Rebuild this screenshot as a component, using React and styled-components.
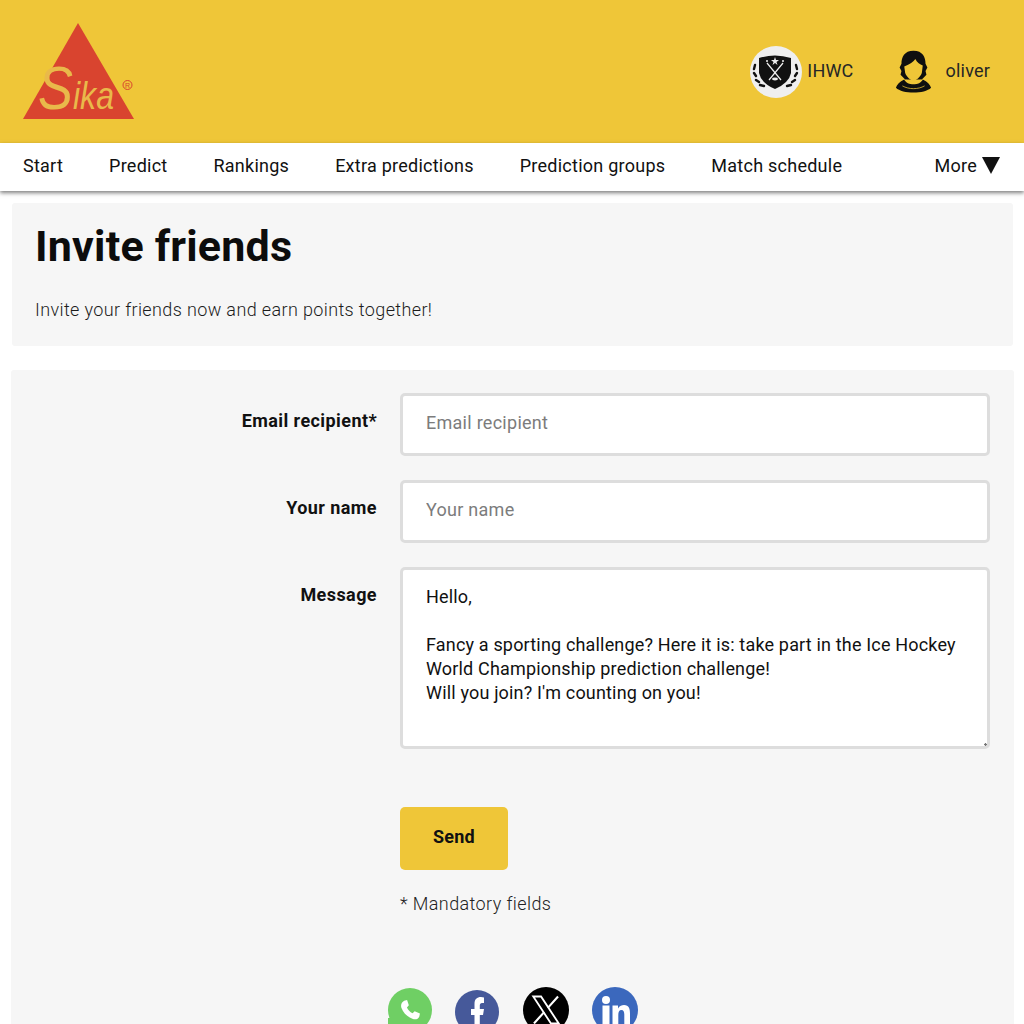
import React from "react"
import styled, { createGlobalStyle } from "styled-components"

const GlobalStyle = createGlobalStyle`
  html, body {
    margin: 0;
    padding: 0;
    height: 1024px;
    overflow: hidden;
    background: #ffffff;
    font-family: "Roboto", "Liberation Sans", sans-serif;
    color: #111111;
  }
  * { box-sizing: border-box; }
`

const Header = styled.header`
  height: 143px;
  background: #efc638;
  display: flex;
  justify-content: space-between;
  padding: 23px 34px 0 23px;
`

const UserArea = styled.div`
  display: flex;
  align-items: flex-start;
  gap: 41px;
  padding-top: 23px;
`

const UserItem = styled.div`
  display: flex;
  align-items: center;
  gap: ${p => p.$gap}px;
  height: 52px;
`

const UserName = styled.span`
  font-size: 18px;
  color: #262626;
  margin-bottom: 4px;
  letter-spacing: 0.2px;
`

const Nav = styled.nav`
  height: 48px;
  background: #fff;
  display: flex;
  align-items: center;
  gap: 46px;
  padding: 0 24px 4px 23px;
  font-size: 18px;
  letter-spacing: 0.25px;
  box-shadow: 0 2px 4px rgba(0, 0, 0, 0.5);
  position: relative;
`

const NavItem = styled.span`
  white-space: nowrap;
  ${p => p.$push && "margin-left: auto;"}
  display: flex;
  align-items: center;
  gap: 5px;
`

const Main = styled.main`
  padding: 12px 10px 0 11px;
  display: flex;
  flex-direction: column;
  gap: 24px;
`

const IntroCard = styled.section`
  height: 143px;
  background: #f6f6f6;
  border-radius: 3px;
  margin: 0 1px;
  padding: 18px 23px 0;
`

const Title = styled.h1`
  margin: 0;
  font-size: 43px;
  line-height: 50px;
  font-weight: 700;
  letter-spacing: 0.2px;
  color: #0c0c0c;
`

const Intro = styled.p`
  margin: 27px 0 0;
  font-size: 18px;
  line-height: 24px;
  font-weight: 300;
  letter-spacing: 0.37px;
  color: #1c1c1c;
`

const FormCard = styled.section`
  background: #f6f6f6;
  border-radius: 3px;
  padding: 23px 24px 0 0;
  height: 700px;
`

const FormRow = styled.div`
  display: grid;
  grid-template-columns: 366px 1fr;
  column-gap: 23px;
  margin-bottom: 24px;
`

const Label = styled.label`
  font-size: 18px;
  font-weight: 700;
  letter-spacing: 0.42px;
  text-align: right;
  padding-top: 16px;
  line-height: 24px;
  color: #111;
`

const TextInput = styled.input`
  height: 63px;
  width: 100%;
  border: 3px solid #dddddd;
  border-radius: 5px;
  background: #fff;
  padding: 0 23px 5px;
  font-family: inherit;
  font-size: 18px;
  letter-spacing: 0.27px;
  &::placeholder { color: #7c7c7c; opacity: 1; }
`

const MessageArea = styled.textarea`
  display: block;
  height: 182px;
  width: 100%;
  border: 3px solid #dddddd;
  border-radius: 5px;
  background: #fff;
  padding: 15px 23px;
  font-family: inherit;
  font-size: 18px;
  line-height: 24px;
  letter-spacing: 0.17px;
  color: #111;
  &::-webkit-resizer {
    background: radial-gradient(circle at 90% 90%, #777 0 1px, transparent 1.5px);
  }
`

const ActionColumn = styled.div`
  margin-left: 389px;
  padding-top: 34px;
`

const SendButton = styled.button`
  width: 108px;
  height: 63px;
  border: 0;
  border-radius: 5px;
  background: #efc638;
  padding: 0 0 4px;
  font-family: inherit;
  font-size: 18px;
  font-weight: 700;
  letter-spacing: 0.2px;
  color: #111;
`

const Note = styled.p`
  margin: 22px 0 0;
  font-size: 18px;
  line-height: 24px;
  font-weight: 300;
  letter-spacing: 0.4px;
  color: #222;
`

const ShareRow = styled.div`
  display: flex;
  justify-content: center;
  align-items: flex-start;
  gap: 23.5px;
  margin-top: 71px;
  padding-left: 25px;
`

const ShareIcon = styled.div`
  width: ${p => p.$size}px;
  height: ${p => p.$size}px;
  margin-top: ${p => p.$top || 0}px;
  border-radius: 50%;
  background: ${p => p.$bg};
  display: flex;
  align-items: center;
  justify-content: center;
  position: relative;
`

const WhatsappIcon = styled(ShareIcon)`
  &::after {
    content: "";
    position: absolute;
    left: 0;
    top: 30px;
    width: 10px;
    height: 14px;
    background: ${p => p.$bg};
  }
`

const SikaLogo = () => (
  <svg width="112" height="98" viewBox="0 0 112 98">
    <polygon points="55,0 111,96 0,96" fill="#d9442f" />
    <text
      x="15"
      y="86"
      fill="#e9b94a"
      fontFamily="Liberation Sans, sans-serif"
      fontStyle="italic"
      textLength="76"
      lengthAdjust="spacingAndGlyphs"
    >
      <tspan fontSize="62">S</tspan>
      <tspan fontSize="38">ika</tspan>
    </text>
    <circle cx="104.5" cy="62" r="4.5" fill="none" stroke="#d9442f" strokeWidth="1" />
    <text x="104.5" y="65" fontSize="7" textAnchor="middle" fill="#d9442f" fontFamily="Liberation Sans, sans-serif">
      R
    </text>
  </svg>
)

const TeamBadge = () => (
  <svg width="52" height="52" viewBox="0 0 52 52">
    <circle cx="26" cy="26" r="26" fill="#efefef" />
    <path d="M9 12 Q25 7 41 12 L41 27 Q39 37 25 43 Q11 37 9 27 Z" fill="#111" />
    <path d="M17 17 L31 34 M33 17 L19 34" stroke="#eee" strokeWidth="1.2" />
    <polygon points="25,11 26,14 29,14 26.5,16 27.5,19 25,17 22.5,19 23.5,16 21,14 24,14" fill="#eee" />
    <circle cx="17" cy="15" r="1" fill="#eee" />
    <circle cx="33" cy="15" r="1" fill="#eee" />
    <ellipse cx="25" cy="33" rx="3" ry="1.4" fill="#eee" />
    <path d="M5 19 L4 23 M4 27 L6 30 M6 34 L9 36 M10 39 L14 40" stroke="#111" strokeWidth="2.4" strokeLinecap="round" />
    <path d="M46 19 L47 23 M47 27 L45 30 M45 34 L42 36 M41 39 L37 40" stroke="#111" strokeWidth="2.4" strokeLinecap="round" />
  </svg>
)

const Avatar = () => (
  <svg width="37" height="44" viewBox="0 0 40 46">
    <path d="M20 0 C10 0 7 7 7 14 L5 18 L7 22 L6 26 L11 31 L29 31 L34 26 L33 22 L35 18 L33 14 C33 7 30 0 20 0 Z" fill="#0f0f0f" />
    <path d="M10 17 C16 15 20 12 22 9 C24 13 27 15 30 16 L29 24 C27 29 23 32 20 32 C17 32 13 29 11 24 Z" fill="#efc638" />
    <path d="M12 31 C14 35 26 35 28 31 L29 32 C26 38 14 38 11 32 Z" fill="#efc638" />
    <path d="M10 31 C13 38 27 38 30 31 C35 33 38 37 39 40 C32 47 8 47 1 40 C2 37 5 33 10 31 Z" fill="#0f0f0f" />
    <path d="M8 38 C15 42 25 42 32 38" stroke="#efc638" strokeWidth="0.8" fill="none" />
  </svg>
)

const Phone = () => (
  <svg width="28" height="28" viewBox="0 0 24 24">
    <path d="M7 4 L9.5 3.5 L11 8 L9.4 9.8 C10.2 11.8 12 13.8 14.2 14.8 L16 13 L20.5 15 L20 17.5 C19 20 16.5 20.5 14 19.5 C9.5 17.8 6 14 4.6 10 C3.8 7.5 5 5 7 4 Z" fill="#fff" />
  </svg>
)

const FacebookF = () => (
  <svg width="44" height="44" viewBox="0 0 44 44">
    <path d="M19.5 44 L19.5 25 L16 25 L16 19 L19.5 19 L19.5 14 C19.5 9 22 7 26 7 L29 7.4 L29 13 L27 13 C25.5 13 24.8 14 24.8 15.5 L24.8 19 L29 19 L28 25 L24.8 25 L24.8 44 Z" fill="#fff" />
  </svg>
)

const XMark = () => (
  <svg width="34" height="34" viewBox="0 0 24 24">
    <path d="M3 2.5 L8.5 2.5 L21 21.5 L15.5 21.5 Z" fill="none" stroke="#fff" strokeWidth="1.3" />
    <path d="M20.5 2.5 L13.3 10.5 M10.7 13.5 L3.5 21.5" stroke="#fff" strokeWidth="1.5" />
  </svg>
)

const LinkedInMark = () => (
  <svg width="46" height="46" viewBox="0 0 46 46">
    <circle cx="14" cy="13" r="4" fill="#fff" />
    <rect x="10.5" y="18.5" width="7" height="20" fill="#fff" />
    <path d="M20.5 18.5 L26 18.5 L26 21.5 C27.5 19 30 18.1 32 18.1 C37 18.1 38 22 38 26.5 L38 38.5 L32.3 38.5 L32.3 27.5 C32.3 25 31.5 23.1 29.5 23.1 C27 23.1 26.3 25.2 26.3 28 L26.3 38.5 L20.5 38.5 Z" fill="#fff" />
  </svg>
)

const navItems = ["Start", "Predict", "Rankings", "Extra predictions", "Prediction groups", "Match schedule"]

const message = `Hello,

Fancy a sporting challenge? Here it is: take part in the Ice Hockey World Championship prediction challenge!
Will you join? I'm counting on you!`

const App = () => {
  return (
    <>
      <GlobalStyle />
      <Header>
        <SikaLogo />
        <UserArea>
          <UserItem $gap={5}>
            <TeamBadge />
            <UserName>IHWC</UserName>
          </UserItem>
          <UserItem $gap={14}>
            <Avatar />
            <UserName>oliver</UserName>
          </UserItem>
        </UserArea>
      </Header>
      <Nav>
        {navItems.map(item => (
          <NavItem key={item}>{item}</NavItem>
        ))}
        <NavItem $push>
          More
          <svg width="18" height="17" viewBox="0 0 18 17">
            <polygon points="0,0 18,0 9,17" fill="#111" />
          </svg>
        </NavItem>
      </Nav>
      <Main>
        <IntroCard>
          <Title>Invite friends</Title>
          <Intro>Invite your friends now and earn points together!</Intro>
        </IntroCard>
        <FormCard>
          <FormRow>
            <Label>Email recipient*</Label>
            <TextInput placeholder="Email recipient" />
          </FormRow>
          <FormRow>
            <Label>Your name</Label>
            <TextInput placeholder="Your name" />
          </FormRow>
          <FormRow>
            <Label>Message</Label>
            <MessageArea defaultValue={message} />
          </FormRow>
          <ActionColumn>
            <SendButton>Send</SendButton>
            <Note>* Mandatory fields</Note>
          </ActionColumn>
          <ShareRow>
            <WhatsappIcon $bg="#6fcf64" $size={44} $top={1}><Phone /></WhatsappIcon>
            <ShareIcon $bg="#46599a" $size={44} $top={3}><FacebookF /></ShareIcon>
            <ShareIcon $bg="#000" $size={46}><XMark /></ShareIcon>
            <ShareIcon $bg="#3b68bd" $size={46}><LinkedInMark /></ShareIcon>
          </ShareRow>
        </FormCard>
      </Main>
    </>
  )
}

export default App
